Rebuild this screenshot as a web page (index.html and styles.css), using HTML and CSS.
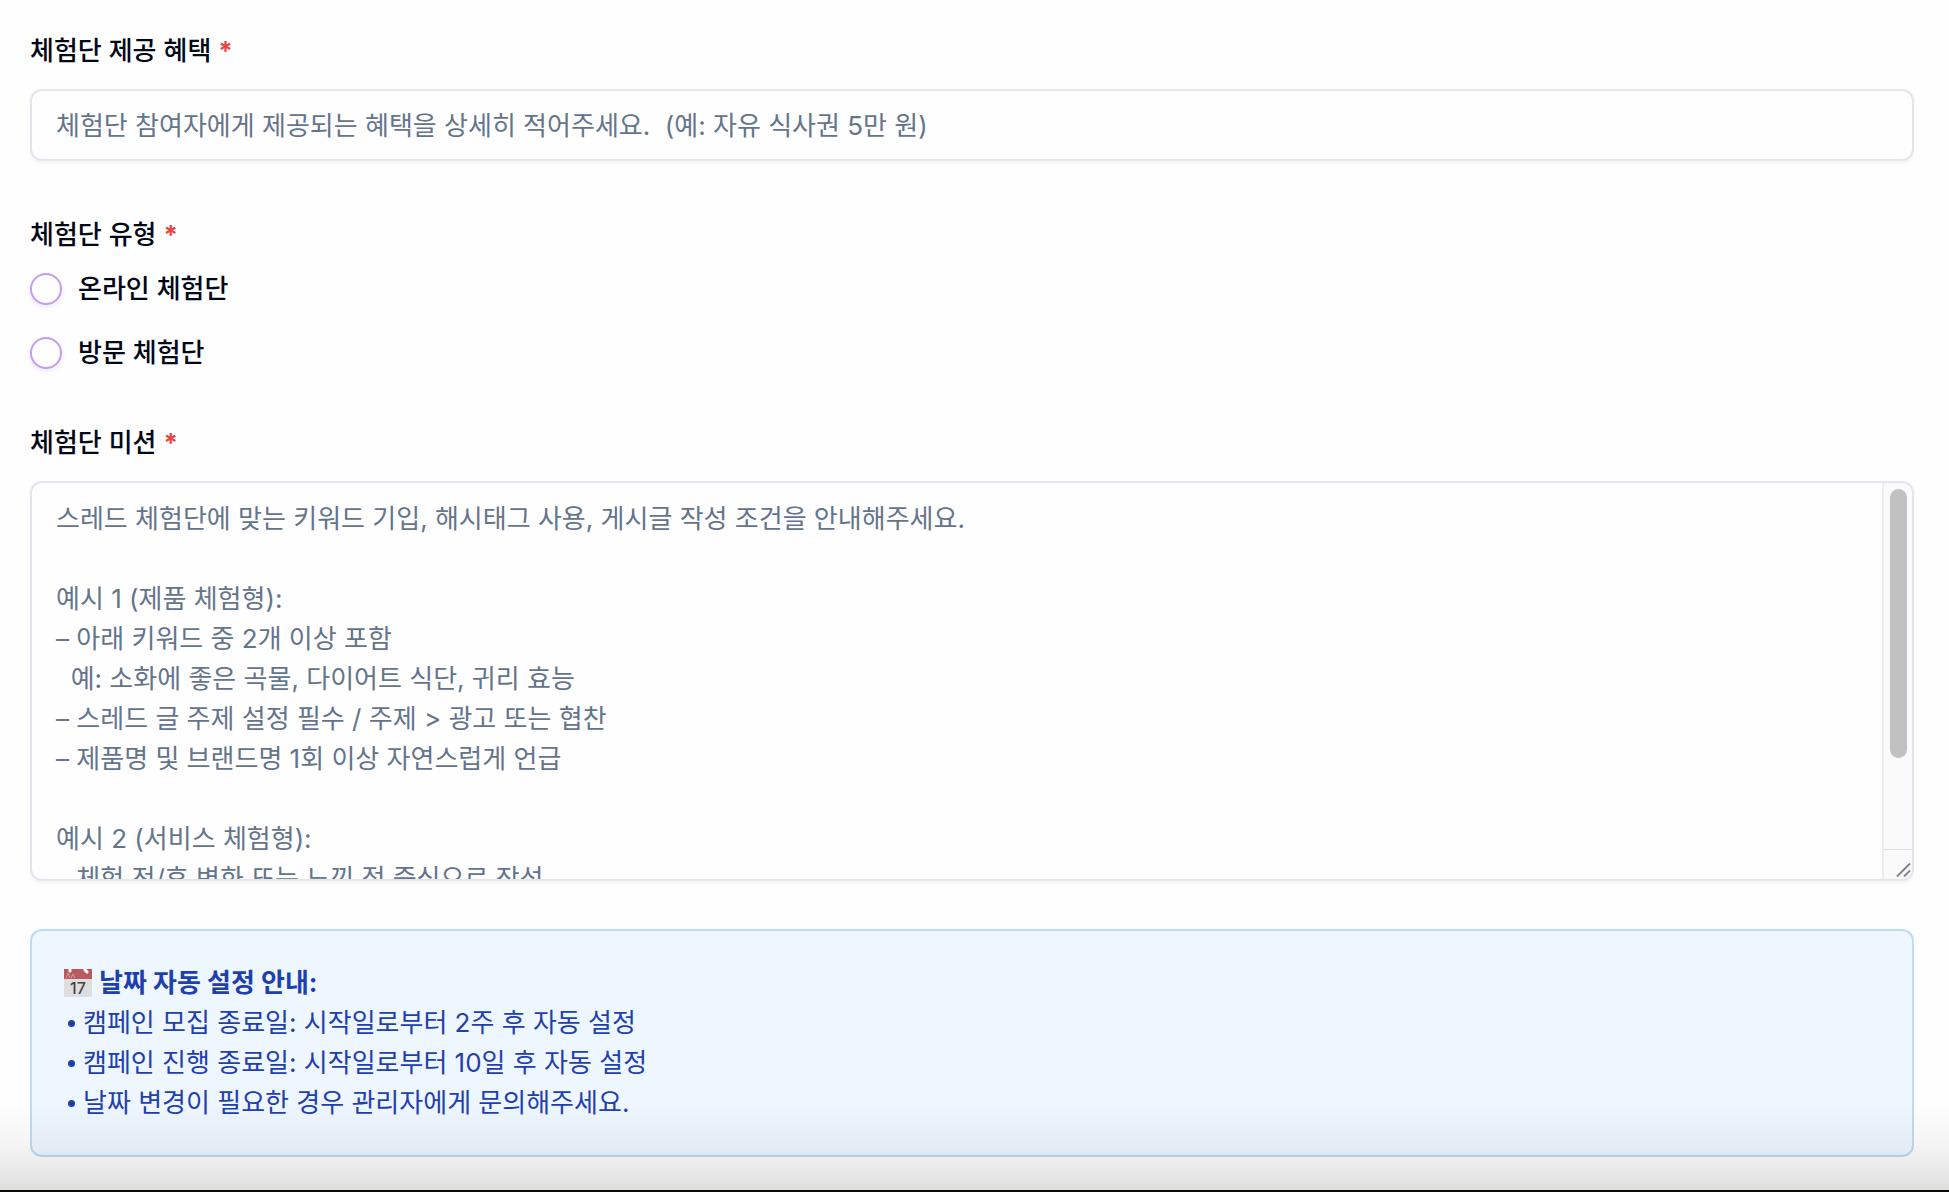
FILE: index.html
```html
<!DOCTYPE html>
<html lang="ko">
<head>
    <meta charset="UTF-8">
    <meta name="viewport" content="width=device-width, initial-scale=1.0">
    <title>체험단 등록</title>
    <link rel="stylesheet" href="styles.css">
</head>
<body>
    <form class="campaign-form">
        <div class="field">
            <label class="field-label" for="benefit">체험단 제공 혜택 <span class="required">*</span></label>
            <input class="text-input" type="text" id="benefit" placeholder="체험단 참여자에게 제공되는 혜택을 상세히 적어주세요.  (예: 자유 식사권 5만 원)">
        </div>

        <fieldset class="field">
            <legend class="field-label">체험단 유형 <span class="required">*</span></legend>
            <div class="radio-group">
                <label class="radio-option">
                    <input type="radio" name="type" value="online">
                    온라인 체험단
                </label>
                <label class="radio-option">
                    <input type="radio" name="type" value="visit">
                    방문 체험단
                </label>
            </div>
        </fieldset>

        <div class="field field-mission">
            <label class="field-label" for="mission">체험단 미션 <span class="required">*</span></label>
            <div class="mission-box">
                <textarea class="text-input mission" id="mission" placeholder="스레드 체험단에 맞는 키워드 기입, 해시태그 사용, 게시글 작성 조건을 안내해주세요.

예시 1 (제품 체험형):
– 아래 키워드 중 2개 이상 포함
  예: 소화에 좋은 곡물, 다이어트 식단, 귀리 효능
– 스레드 글 주제 설정 필수 / 주제 > 광고 또는 협찬
– 제품명 및 브랜드명 1회 이상 자연스럽게 언급

예시 2 (서비스 체험형):
– 체험 전/후 변화 또는 느낀 점 중심으로 작성"></textarea>
                <div class="scrollbar" aria-hidden="true">
                    <div class="scroll-track">
                        <div class="scroll-thumb"></div>
                    </div>
                    <svg class="resizer" viewBox="0 0 28 28">
                        <path d="M13 26L26 13M20 26L26 20" stroke="#858585" stroke-width="2"/>
                    </svg>
                </div>
            </div>
        </div>

        <div class="notice">
            <p class="notice-title">
                <svg class="calendar" viewBox="0 0 28 28" aria-hidden="true">
                    <rect x="0" y="0" width="28" height="28" fill="#dedede"/>
                    <rect x="0" y="0" width="28" height="10" fill="#b85c60"/>
                    <path d="M2 9l2-5 2 5M7 9l2-4 2 4" fill="none" stroke="#d59a9c" stroke-width="1"/>
                    <path d="M6 1v1M21 1l2 2" stroke="#fff" stroke-width="3" stroke-linecap="round"/>
                    <text x="14" y="25" text-anchor="middle" class="calendar-day">17</text>
                </svg>
                날짜 자동 설정 안내:
            </p>
            <ul class="notice-list">
                <li>캠페인 모집 종료일: 시작일로부터 2주 후 자동 설정</li>
                <li>캠페인 진행 종료일: 시작일로부터 10일 후 자동 설정</li>
                <li>날짜 변경이 필요한 경우 관리자에게 문의해주세요.</li>
            </ul>
        </div>
    </form>
    <div class="bottom-shade"></div>
</body>
</html>
```

FILE: styles.css
```css
* {
    box-sizing: border-box;
}
body {
    margin: 0;
    font-family: Inter, "Noto Sans CJK KR", sans-serif;
    font-size: 26px;
    line-height: 40px;
    color: #020817;
    background-color: #fefefe;
}
.campaign-form {
    padding: 37px 35px 32px 30px;
}
.field {
    margin: 0 0 60px;
    padding: 0;
    border: none;
}
.field-mission {
    margin-bottom: 48px;
}
.field-label {
    display: block;
    margin-bottom: 24px;
    padding: 0;
    line-height: 28px;
    font-weight: 500;
}
.required {
    color: #ef4444;
    font-weight: 700;
}
.text-input {
    display: block;
    width: 100%;
    height: 72px;
    padding: 14px 24px;
    border: 2px solid #e3e5ed;
    border-radius: 12px;
    background-color: #fefefe;
    box-shadow: 0 2px 4px rgba(0, 0, 0, 0.05);
    font: inherit;
    color: inherit;
}
.text-input::placeholder {
    color: #64748b;
    opacity: 1;
}
.mission-box {
    position: relative;
}
.mission {
    height: 400px;
    padding: 16px 54px 16px 24px;
    resize: none;
    overflow: hidden;
}
/* scrollbar drawn over the right edge of the textarea */
.scrollbar {
    position: absolute;
    top: 2px;
    right: 2px;
    bottom: 2px;
    width: 30px;
    display: flex;
    flex-direction: column;
    border-left: 2px solid #ededed;
    border-radius: 0 10px 10px 0;
    background-color: #fafafa;
}
.scroll-track {
    flex: 1;
    padding: 6px 5px 6px 6px;
}
.scroll-thumb {
    height: 76%;
    border-radius: 9px;
    background-color: #c1c1c1;
}
.resizer {
    width: 28px;
    height: 30px;
    border-top: 1px solid #e0e0e0;
}
.radio-group {
    display: flex;
    flex-direction: column;
    gap: 32px;
}
.radio-option {
    display: flex;
    align-items: center;
    gap: 16px;
    line-height: 32px;
    font-weight: 500;
}
.radio-option input {
    appearance: none;
    width: 32px;
    height: 32px;
    margin: 0;
    border: 2px solid #c09cf3;
    border-radius: 50%;
    box-shadow: 0 2px 4px rgba(147, 51, 234, 0.12);
}
.radio-option input:checked {
    background: radial-gradient(circle, #9333ea 8px, transparent 9px);
}
.notice {
    padding: 32px;
    border: 2px solid #bfdbf8;
    border-radius: 12px;
    background-color: #eef6ff;
    color: #1e40af;
}
.notice-title {
    display: flex;
    align-items: center;
    gap: 7px;
    margin: 0;
    font-weight: 700;
}
.calendar {
    width: 28px;
    height: 28px;
}
.calendar-day {
    font-size: 16px;
    font-weight: 500;
    fill: #444;
}
.notice-list {
    margin: 0;
    padding: 0 0 0 4px;
    list-style: none;
}
.notice-list li {
    display: flex;
    align-items: center;
    gap: 8px;
}
.notice-list li::before {
    content: "";
    width: 7px;
    height: 7px;
    border-radius: 50%;
    background-color: #1e40af;
}
/* soft fade and dark edge along the bottom of the window */
.bottom-shade {
    position: fixed;
    left: 0;
    right: 0;
    bottom: 0;
    height: 90px;
    border-bottom: 2px solid #0a0a08;
    background: linear-gradient(rgba(0, 0, 0, 0), rgba(0, 0, 0, 0.04) 50%, rgba(0, 0, 0, 0.12));
    pointer-events: none;
}
```
